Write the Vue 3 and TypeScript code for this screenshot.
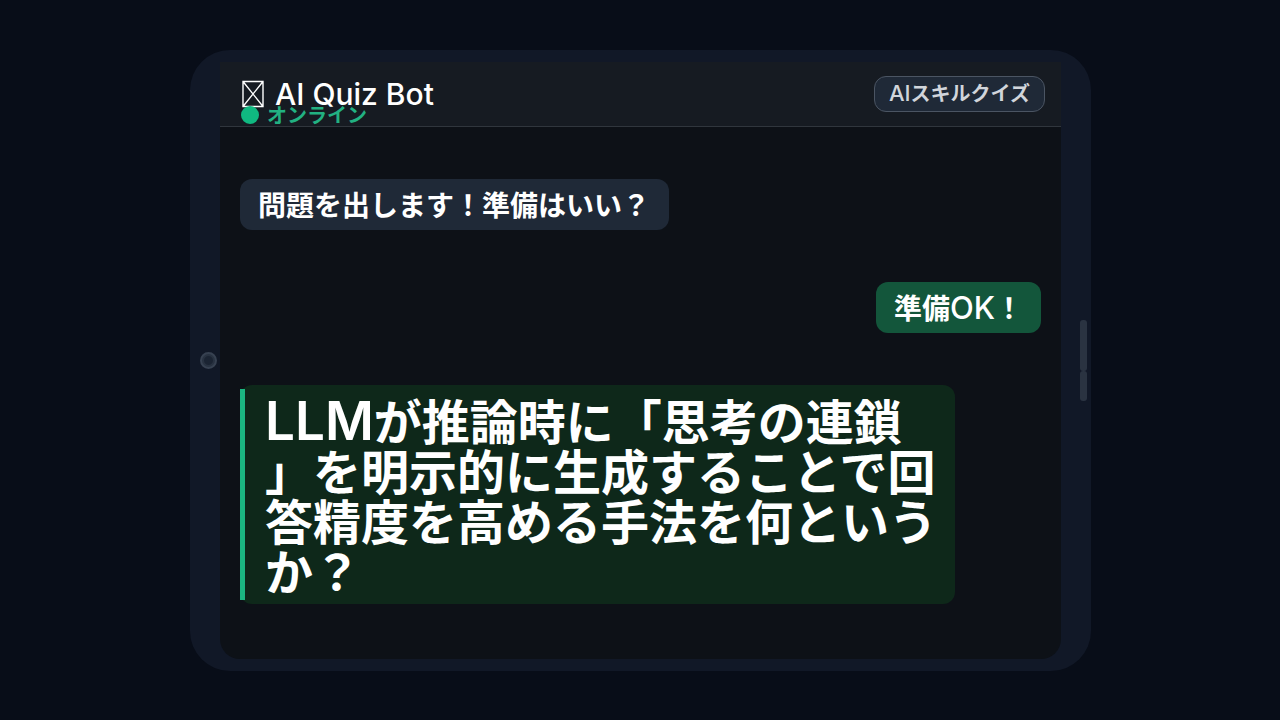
<script setup lang="ts">
interface Run {
  text: string
  latin?: boolean
}

interface Message {
  id: number
  kind: 'bot' | 'user' | 'question'
  runs: Run[]
}

const title = 'AI Quiz Bot'
const status = 'オンライン'

const messages: Message[] = [
  { id: 1, kind: 'bot', runs: [{ text: '問題を出します！準備はいい？' }] },
  { id: 2, kind: 'user', runs: [{ text: '準備' }, { text: 'OK', latin: true }, { text: '！' }] },
  {
    id: 3,
    kind: 'question',
    runs: [
      { text: 'LLM', latin: true },
      { text: 'が推論時に「思考の連鎖」を明示的に生成することで回答精度を高める手法を何というか？' },
    ],
  },
]
</script>

<template>
  <main class="stage">
    <div class="device">
      <span class="camera"></span>
      <span class="side-keys"><i class="key long"></i><i class="key"></i></span>
      <section class="screen">
        <header class="bar">
          <div class="identity">
            <h1 class="title">
              <svg class="avatar" viewBox="0 0 22 28" aria-hidden="true">
                <path d="M1 1.5H21V26.5H1ZM1 1.5L21 26.5M21 1.5L1 26.5" />
              </svg>
              <span>{{ title }}</span>
            </h1>
            <p class="status"><span class="dot"></span>{{ status }}</p>
          </div>
          <span class="badge"><span class="latin">AI</span>スキルクイズ</span>
        </header>
        <div class="chat">
          <p v-for="m in messages" :key="m.id" class="bubble" :class="m.kind">
            <span v-for="(r, i) in m.runs" :key="i" :class="{ latin: r.latin }">{{ r.text }}</span>
          </p>
        </div>
      </section>
    </div>
  </main>
</template>

<style>
body {
  margin: 0;
  background: #080d18;
}
</style>

<style scoped>
.stage {
  box-sizing: border-box;
  min-height: 100vh;
  padding: 50px 189px 49px 190px;
  display: flex;
  background: #080d18;
  color: #fff;
  font-family: "Noto Sans CJK JP", sans-serif;
  font-weight: 700;
}
.device {
  position: relative;
  box-sizing: border-box;
  flex: 1;
  display: flex;
  padding: 12px 30px;
  border-radius: 40px;
  background: #111827;
}
.camera {
  position: absolute;
  left: 10px;
  top: 50%;
  box-sizing: border-box;
  width: 17px;
  height: 17px;
  margin-top: -9px;
  border: 2px solid #374151;
  border-radius: 50%;
  background: radial-gradient(circle, #1b2433 4px, #283241 5px);
}
.side-keys {
  position: absolute;
  right: 4px;
  top: 270px;
}
.key {
  display: block;
  width: 7px;
  height: 30px;
  border-radius: 3px;
  background: #2a3341;
}
.key.long {
  height: 51px;
}
.screen {
  flex: 1;
  display: flex;
  flex-direction: column;
  border-radius: 0 0 20px 20px;
  background: #0d1117;
}
.bar {
  display: flex;
  justify-content: space-between;
  align-items: flex-start;
  box-sizing: border-box;
  height: 65px;
  padding: 14px 16px 0 20px;
  border-bottom: 1px solid #30363d;
  background: #161b22;
}
.title {
  display: flex;
  align-items: center;
  gap: 11px;
  margin: 0;
  padding-left: 2px;
  font-family: Inter, sans-serif;
  font-size: 30px;
  font-weight: 500;
  line-height: 36px;
}
.avatar {
  width: 22px;
  height: 28px;
  fill: none;
  stroke: #fff;
  stroke-width: 1.4;
}
.status {
  display: flex;
  align-items: center;
  gap: 8px;
  margin: -7px 0 0;
  padding-left: 1px;
  color: #22b182;
  font-size: 20px;
  line-height: 20px;
}
.dot {
  width: 18px;
  height: 18px;
  border-radius: 50%;
  background: #10b981;
}
.badge {
  box-sizing: border-box;
  height: 36px;
  padding: 0 14px;
  border: 1px solid #4b5563;
  border-radius: 12px;
  background: #1f2937;
  color: #d1d5db;
  font-size: 20px;
  font-weight: 700;
  line-height: 32px;
}
.badge .latin {
  font-size: 22px;
}
.chat {
  display: flex;
  flex-direction: column;
  align-items: flex-start;
  gap: 52px;
  padding: 52px 20px;
}
.bubble {
  box-sizing: border-box;
  margin: 0;
  padding: 0 18px;
  border-radius: 12px;
  font-size: 28px;
  line-height: 51px;
  text-spacing-trim: space-all;
}
.latin {
  font-family: Inter, sans-serif;
  font-weight: 500;
  line-height: 0;
}
.bot {
  padding-right: 19px;
  background: #1f2937;
}
.user {
  align-self: flex-end;
  background: #13563b;
}
.user .latin {
  font-size: 31px;
}
.question {
  position: relative;
  max-width: 715px;
  padding: 9px 18px 10px 25px;
  background: #0e281a;
  font-size: 48px;
  line-height: 50px;
  line-break: anywhere;
}
.question::before {
  content: "";
  position: absolute;
  left: 0;
  top: 4px;
  bottom: 4px;
  width: 5px;
  background: #1bb681;
}
.question .latin {
  font-size: 53px;
  font-weight: 600;
}
</style>
